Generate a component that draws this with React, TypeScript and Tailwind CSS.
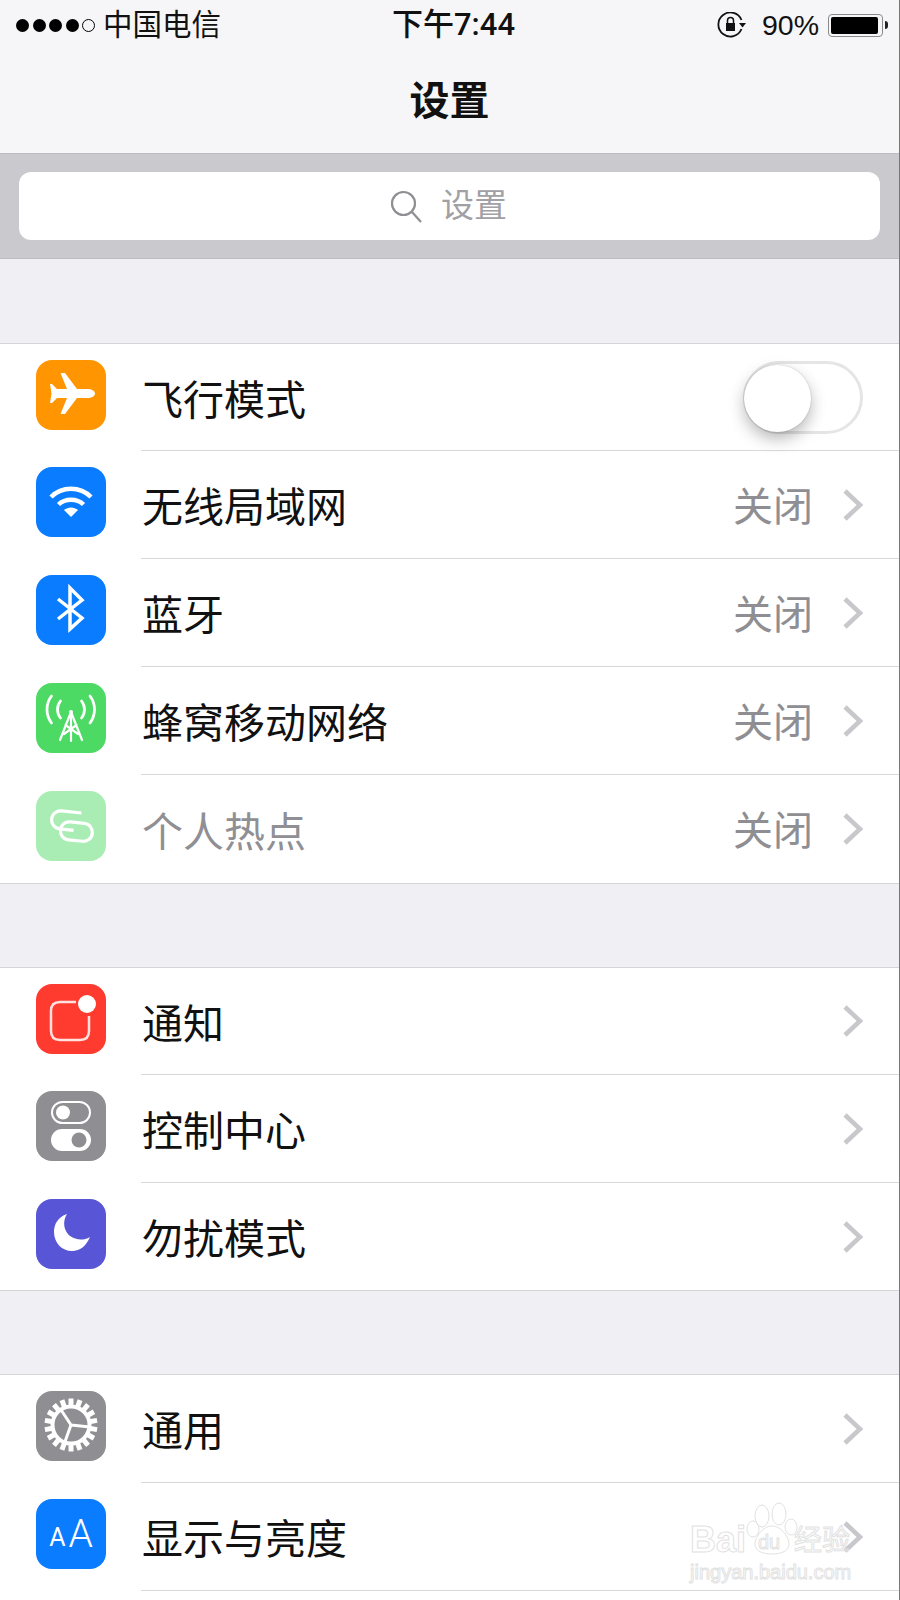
import React from "react";

const FONT = '"Liberation Sans", "Noto Sans CJK SC", sans-serif';

function Chevron() {
  return (
    <svg width="22" height="34" viewBox="0 0 22 34" fill="none" className="shrink-0">
      <path d="M3 3L18 17L3 31" stroke="#c7c7cc" strokeWidth="4.500" />
    </svg>
  );
}

function AirplaneIcon() {
  return (
    <svg viewBox="0 0 70 70" className="w-full h-full">
      <path
        d="M59 33.500C59 30.500 55 29 52 29H41L29 13H24.500L31 29H21L16 24H14L15.500 33.500L14 43H16L21 38H31L24.500 54H29L41 38H52C55 38 59 36.500 59 33.500z"
        fill="#fff"
      />
    </svg>
  );
}

function WifiIcon() {
  return (
    <svg viewBox="0 0 70 70" fill="none" className="w-full h-full">
      <path d="M15 30C26 19 44 19 55 30" stroke="#fff" strokeWidth="4.500" />
      <path d="M22.500 37.500C29 31 41 31 47.500 37.500" stroke="#fff" strokeWidth="4.500" />
      <path d="M28 43C32 39.500 38 39.500 42 43L35 50z" fill="#fff" />
    </svg>
  );
}

function BluetoothIcon() {
  return (
    <svg viewBox="0 0 70 70" fill="none" className="w-full h-full">
      <path d="M22 24L46 43L34 54V13L46 25L22 44" stroke="#fff" strokeWidth="3.500" />
    </svg>
  );
}

function CellularIcon() {
  return (
    <svg viewBox="0 0 70 70" fill="none" className="w-full h-full" stroke="#fff" strokeLinecap="round">
      <path d="M15.500 13C9.500 21 9.500 32 15.500 40" strokeWidth="2.800" />
      <path d="M24.500 18C20.500 23 20.500 30 24.500 35" strokeWidth="2.800" />
      <path d="M54 13C60 21 60 32 54 40" strokeWidth="2.800" />
      <path d="M45.500 18C49.500 23 49.500 30 45.500 35" strokeWidth="2.800" />
      <circle cx="35" cy="29" r="2" fill="#fff" stroke="none" />
      <path d="M35 29V58M35 29L24 57M35 29L46 57M29.500 42L42 51M40.500 42L28 51" strokeWidth="2.200" />
    </svg>
  );
}

function HotspotIcon() {
  return (
    <svg viewBox="0 0 70 70" fill="none" className="w-full h-full" stroke="#fff" strokeWidth="3.200">
      <g transform="rotate(6 35 35)">
        <path d="M44 21H24C19 21 15 25 15 30C15 35 19 39 24 39H38" />
        <path d="M48 31H34C28.500 31 25 35 25 40C25 45 28.500 49 34 49H48C53 49 57 45 57 40C57 35 53 31 48 31z" />
      </g>
    </svg>
  );
}

function NotificationIcon() {
  return (
    <svg viewBox="0 0 70 70" fill="none" className="w-full h-full">
      <path
        d="M40 18H24C18 18 15 21 15 27V47C15 53 18 56 24 56H44C50 56 53 53 53 47V32"
        stroke="#fff"
        strokeOpacity="0.85"
        strokeWidth="2.500"
      />
      <circle cx="51" cy="20" r="9" fill="#fff" />
    </svg>
  );
}

function ControlIcon() {
  return (
    <svg viewBox="0 0 70 70" fill="none" className="w-full h-full">
      <rect x="16" y="11" width="38" height="21" rx="10.500" stroke="#fff" strokeWidth="2" />
      <circle cx="27" cy="21.500" r="7" fill="#fff" />
      <rect x="15" y="38" width="40" height="22" rx="11" fill="#fff" />
      <circle cx="43" cy="49" r="7.500" fill="#8e8e93" />
    </svg>
  );
}

function MoonIcon() {
  return (
    <svg viewBox="0 0 70 70" className="w-full h-full">
      <path d="M31 15C22 18 18 25 18 33C18 44 26 52 36 52C44 52 50 47 54 38C47 42 40 41 34 37C28 32 26 23 31 15z" fill="#fff" />
    </svg>
  );
}

function GearIcon() {
  const teeth = Array.from({ length: 18 }, (_, i) => i * 20);
  return (
    <svg viewBox="0 0 70 70" fill="none" className="w-full h-full">
      {teeth.map((a) => (
        <rect key={a} x="32.500" y="7.500" width="5" height="8" fill="#fff" transform={`rotate(${a} 35 34)`} />
      ))}
      <circle cx="35" cy="34" r="18.500" stroke="#fff" strokeWidth="4" />
      <path d="M35 34L54 36M35 34L28.500 52M35 34L24.500 18" stroke="#fff" strokeWidth="3" />
    </svg>
  );
}

function DisplayIcon() {
  return (
    <div className="w-full h-full flex items-center justify-center gap-[3px] text-white font-['Roboto',sans-serif]">
      <span className="text-[25px] leading-none mt-[6px]">A</span>
      <span className="text-[39px] leading-none font-light">A</span>
    </div>
  );
}

type RowProps = {
  label: string;
  bg: string;
  icon: React.ReactNode;
  value?: string;
  last?: boolean;
  dim?: boolean;
  toggle?: boolean;
  short?: boolean;
};

function Toggle() {
  return (
    <div className="relative w-[120px] h-[73px] mr-[36px] rounded-full border-[3px] border-[#e5e5e5] bg-white">
      <div className="absolute left-[-2px] top-[1px] w-[67px] h-[67px] rounded-full bg-white shadow-[0_7px_16px_rgba(0,0,0,0.28),0_0_2px_rgba(0,0,0,0.2)]" />
    </div>
  );
}

function Row({ label, bg, icon, value, last, dim, toggle, short }: RowProps) {
  return (
    <div className={`flex items-center bg-white ${short ? "h-[107px]" : "h-[108px]"}`}>
      <div className={`w-[70px] h-[70px] ml-[36px] mr-[35px] mb-[6px] rounded-[16px] overflow-hidden shrink-0 ${bg}`}>{icon}</div>
      <div className={`flex-1 h-full flex items-center justify-between ${last ? "" : "border-b-[1.500px] border-[#d8d8db]"}`}>
        <span className={`mt-[8px] ml-[1px] text-[41px] leading-none ${dim ? "text-[#8f8f94]" : "text-[#111]"}`}>{label}</span>
        {toggle ? (
          <Toggle />
        ) : (
          <div className="flex items-center mr-[35px]">
            {value && <span className="mt-[4px] text-[40px] leading-none text-[#8e8e93] mr-[29px]">{value}</span>}
            <Chevron />
          </div>
        )}
      </div>
    </div>
  );
}

function Group({ children }: { children: React.ReactNode }) {
  return <div className="border-y-[1.500px] border-[#d5d5d8] bg-white">{children}</div>;
}

function StatusBar() {
  return (
    <div className="relative flex items-center justify-between h-[50px] pl-[16px] pr-[11px] text-[#111]">
      <div className="flex items-center">
        {[0, 1, 2, 3].map((i) => (
          <div key={i} className="w-[13px] h-[13px] mr-[3.500px] rounded-full bg-black" />
        ))}
        <div className="w-[13px] h-[13px] rounded-full border border-black" />
        <span className="ml-[8px] text-[29.500px] leading-none">中国电信</span>
      </div>
      <span className="absolute left-[392px] top-[7px] text-[31px] leading-[36px] font-medium font-['Roboto','Noto_Sans_CJK_SC',sans-serif]">
        下午7:44
      </span>
      <div className="flex items-center">
        <svg width="30" height="26" viewBox="0 0 30 26" fill="none" className="mr-[15px]">
          <path d="M24.500 17A12 12 0 1 1 24.500 8" stroke="#111" strokeWidth="1.800" />
          <path d="M22 11H29L25.500 15.500z" fill="#111" />
          <rect x="9" y="11" width="9" height="8" fill="#111" />
          <path d="M10.500 11V8.500C10.500 4.500 16.500 4.500 16.500 8.500V11" stroke="#111" strokeWidth="1.500" />
        </svg>
        <span className="text-[28.500px] leading-none mr-[9px]">90%</span>
        <div className="w-[55px] h-[23px] p-[2px] rounded-[4px] border-[1.500px] border-[#8a8a8a]">
          <div className="w-[47px] h-full rounded-[2px] bg-black" />
        </div>
        <div className="w-[3px] h-[8px] ml-[2px] bg-[#222] rounded-r-sm" />
      </div>
    </div>
  );
}

function Watermark() {
  return (
    <div className="absolute left-[690px] top-[1502px] w-[170px] h-[80px] text-transparent [-webkit-text-stroke:1px_#e2e2e2]">
      <span className="absolute left-0 top-[20px] text-[36px] leading-[36px] font-bold">Bai</span>
      <svg width="56" height="56" viewBox="0 0 56 56" fill="none" stroke="#e2e2e2" className="absolute left-[54px] top-0">
        <ellipse cx="18" cy="14" rx="7" ry="11" />
        <ellipse cx="35" cy="12" rx="7" ry="11" />
        <ellipse cx="47" cy="25" rx="6" ry="8" />
        <ellipse cx="9" cy="27" rx="6" ry="8" />
        <path d="M28 24C18 24 8 38 12 46C16 54 40 54 44 46C48 38 38 24 28 24z" />
      </svg>
      <span className="absolute left-[68px] top-[30px] text-[20px] leading-[20px]">du</span>
      <span className="absolute left-[104px] top-[24px] text-[28px] leading-[30px]">经验</span>
      <span className="absolute left-0 top-[59px] text-[20px] leading-[22px] whitespace-nowrap">jingyan.baidu.com</span>
    </div>
  );
}

export default function App() {
  return (
    <div
      className="relative w-[900px] h-[1600px] overflow-hidden flex flex-col bg-[#efeff4] border-r border-[#777]"
      style={{ fontFamily: FONT }}
    >
      <div className="h-[153px] flex flex-col bg-[#f6f6f8] shrink-0">
        <StatusBar />
        <div className="flex-1 flex items-center justify-center pb-[2px]">
          <h1 className="text-[40px] leading-none font-bold text-[#111]">设置</h1>
        </div>
      </div>

      <div className="h-[106px] shrink-0 px-[19px] pt-[18px] bg-[#c9c9ce] border-y border-[#bcbcc1]">
        <div className="h-[68px] rounded-[12px] bg-white flex items-center justify-center gap-[18px] pr-[2px]">
          <svg width="33" height="33" viewBox="0 0 33 33" fill="none" stroke="#8e8e93" strokeWidth="2.200">
            <circle cx="13.500" cy="13.500" r="11.500" />
            <path d="M22 22L31 32" />
          </svg>
          <span className="text-[33px] leading-none text-[#a0a0a5] mb-[2px]">设置</span>
        </div>
      </div>

      <div className="h-[84px] shrink-0" />

      <Group>
        <Row label="飞行模式" bg="bg-[#ff9500]" icon={<AirplaneIcon />} toggle short />
        <Row label="无线局域网" bg="bg-[#0a7cff]" icon={<WifiIcon />} value="关闭" />
        <Row label="蓝牙" bg="bg-[#0a7cff]" icon={<BluetoothIcon />} value="关闭" />
        <Row label="蜂窝移动网络" bg="bg-[#4cd964]" icon={<CellularIcon />} value="关闭" />
        <Row label="个人热点" bg="bg-[#a9edb5]" icon={<HotspotIcon />} value="关闭" last dim />
      </Group>

      <div className="h-[83px] shrink-0" />

      <Group>
        <Row label="通知" bg="bg-[#ff3b30]" icon={<NotificationIcon />} short />
        <Row label="控制中心" bg="bg-[#8e8e93]" icon={<ControlIcon />} />
        <Row label="勿扰模式" bg="bg-[#5856d6]" icon={<MoonIcon />} last short />
      </Group>

      <div className="h-[83px] shrink-0" />

      <div className="flex-1 border-t-[1.500px] border-[#d5d5d8] bg-white">
        <Row label="通用" bg="bg-[#8e8e93]" icon={<GearIcon />} />
        <Row label="显示与亮度" bg="bg-[#0a7cff]" icon={<DisplayIcon />} />
      </div>

      <Watermark />
    </div>
  );
}
